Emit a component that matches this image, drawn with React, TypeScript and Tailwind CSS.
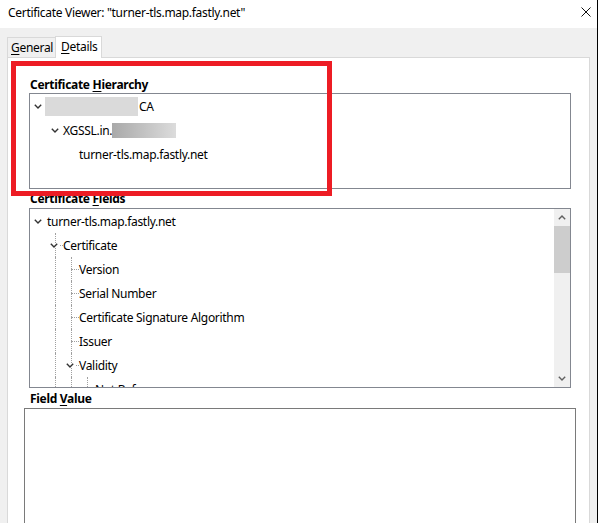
import React from "react";

const FONT = "font-['Noto_Sans','Liberation_Sans',sans-serif] tracking-[-0.3px]";

type Row = { label: React.ReactNode; level: number; open?: boolean };

const fieldRows: Row[] = [
  { label: "turner-tls.map.fastly.net", level: 0, open: true },
  { label: "Certificate", level: 1, open: true },
  { label: "Version", level: 2 },
  { label: "Serial Number", level: 2 },
  { label: "Certificate Signature Algorithm", level: 2 },
  { label: "Issuer", level: 2 },
  { label: "Validity", level: 2, open: true },
  { label: "Not Before", level: 3 },
];

function Chevron({ up = false, color = "#333" }: { up?: boolean; color?: string }) {
  return (
    <svg width="8" height="5" viewBox="0 0 8 5" className="block">
      <path
        d={up ? "M0.8 4.2 L4 1 L7.2 4.2" : "M0.8 0.8 L4 4 L7.2 0.8"}
        fill="none"
        stroke={color}
        strokeWidth="1.4"
      />
    </svg>
  );
}

// 트리 한 줄 — 들여쓰기 16px, 점선 가이드는 행 위에 겹쳐 그림
function TreeRow({ row, guides }: { row: Row; guides: boolean }) {
  const guideXs = guides ? Array.from({ length: row.level }, (_, k) => 25 + 16 * k) : [];
  return (
    <div className="relative h-6 flex items-center">
      {guideXs.map((x) => (
        <span
          key={x}
          className="absolute top-0 bottom-0 border-l border-dotted border-[#a0a0a0]"
          style={{ left: x }}
        />
      ))}
      {guides && row.level > 0 && (
        <span
          className="absolute top-1/2 border-t border-dotted border-[#a0a0a0]"
          style={{ left: 25 + 16 * (row.level - 1), width: 8 }}
        />
      )}
      <div className="shrink-0" style={{ width: 4 + 16 * row.level }} />
      <div className="relative w-[13px] shrink-0 flex items-center">
        {row.open && (
          <span className="bg-white pr-[1px]">
            <Chevron />
          </span>
        )}
      </div>
      <div className="relative top-px bg-white text-[12px] leading-4 text-black whitespace-nowrap">{row.label}</div>
    </div>
  );
}

function Heading({ children }: { children: React.ReactNode }) {
  return <div className="pl-[1px] pt-px h-4 text-[12px] leading-4 font-bold text-black">{children}</div>;
}

export default function App() {
  return (
    <div className={`relative w-[598px] h-[523px] overflow-hidden bg-[#f0f0f0] border-r border-black flex flex-col ${FONT}`}>
      {/* 제목 표시줄 */}
      <div className="h-[28px] shrink-0 bg-white flex items-start justify-between pl-2 pr-[6px] pt-[5px]">
        <div className="text-[12px] leading-4 text-black">Certificate Viewer: "turner-tls.map.fastly.net"</div>
        <svg width="10" height="10" viewBox="0 0 10 10" className="mt-[2px]">
          <path d="M0.5 0.5 L9.5 9.5 M9.5 0.5 L0.5 9.5" stroke="#111" strokeWidth="1" />
        </svg>
      </div>

      {/* 탭 */}
      <div className="mt-2 pl-[7px] flex items-end h-[21px] shrink-0">
        <div className="h-[20px] w-[48px] border-l border-t border-[#d9d9d9] text-[12px] leading-4 pl-[3px] pt-[2px] text-black">
          <span className="underline underline-offset-2">G</span>eneral
        </div>
        <div className="relative z-10 -mb-px h-[22px] w-[47px] bg-white border-l border-t border-r border-[#d9d9d9] text-[12px] leading-4 pl-[5px] pt-[2px] text-black">
          <span className="underline underline-offset-2">D</span>etails
        </div>
      </div>

      {/* 탭 패널 */}
      <div className="ml-[7px] w-[583px] flex-1 bg-white border border-[#d9d9d9] pl-[21px] pt-[18px]">
        <Heading>
          Certificate <span className="underline underline-offset-2">H</span>ierarchy
        </Heading>
        <div className="mt-px w-[542px] h-[96px] border border-[#838790] bg-white">
          <div className="relative h-6 flex items-center">
            <div className="w-[4px] shrink-0" />
            <div className="w-[11px] shrink-0">
              <Chevron />
            </div>
            <div className="w-[93px] h-[19px] bg-[#dadada] blur-[0.5px]" />
            <div className="relative top-px ml-px text-[12px] leading-4 text-black">CA</div>
          </div>
          <div className="relative h-6 flex items-center">
            <div className="w-[21px] shrink-0" />
            <div className="w-[12px] shrink-0">
              <Chevron />
            </div>
            <div className="relative top-px text-[12px] leading-4 text-black">XGSSL.in.</div>
            <div className="w-[64px] h-[15px] bg-gradient-to-r from-[#a9a9a9] to-[#dcdcdc] blur-[0.5px]" />
          </div>
          <TreeRow row={{ label: "turner-tls.map.fastly.net", level: 2 }} guides={false} />
        </div>

        <div className="mt-px">
          <Heading>
            Certificate <span className="underline underline-offset-2">F</span>ields
          </Heading>
        </div>
        <div className="mt-[2px] w-[542px] h-[180px] border border-[#838790] bg-white flex">
          <div className="flex-1 overflow-hidden">
            {fieldRows.map((r, i) => (
              <TreeRow key={i} row={r} guides />
            ))}
          </div>
          <div className="w-[16px] bg-[#f0f0f0] flex flex-col">
            <div className="h-[17px] flex items-center justify-center">
              <Chevron up color="#606060" />
            </div>
            <div className="h-[47px] bg-[#cdcdcd]" />
            <div className="flex-1" />
            <div className="h-[17px] flex items-center justify-center">
              <Chevron color="#606060" />
            </div>
          </div>
        </div>

        <div className="mt-[2px]">
          <Heading>
            Field <span className="underline underline-offset-2">V</span>alue
          </Heading>
        </div>
        <div className="mt-[2px] -ml-[5px] w-[552px] h-[160px] border border-[#7a7a7a] bg-white" />
      </div>

      {/* 강조용 빨간 사각형 */}
      <div className="absolute left-[11px] top-[61px] w-[321px] h-[135px] border-[5px] border-[#ed1c24] pointer-events-none" />
    </div>
  );
}
